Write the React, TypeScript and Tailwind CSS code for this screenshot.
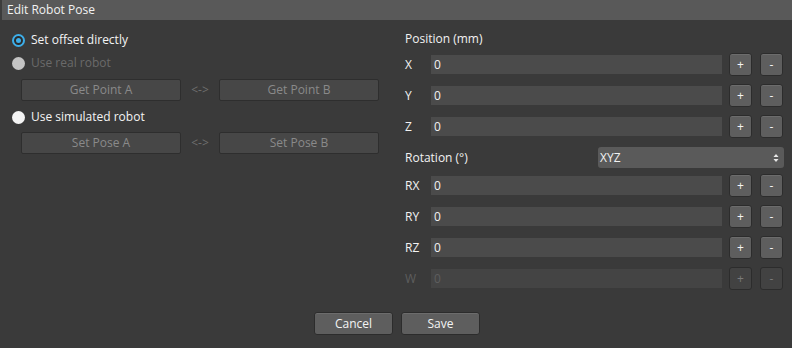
import React from "react";

const font = { fontFamily: '"Open Sans", "Noto Sans", sans-serif' };

function Radio({ state }: { state: "on" | "off" | "disabled" }) {
  if (state === "on")
    return (
      <span className="w-[13px] h-[13px] rounded-full border-2 border-[#3daee9] bg-[#2b2b2b] flex items-center justify-center">
        <span className="w-[5px] h-[5px] rounded-full bg-[#3daee9]" />
      </span>
    );
  if (state === "off") return <span className="w-[13px] h-[13px] rounded-full bg-[#f4f4f4]" />;
  return <span className="w-[13px] h-[13px] rounded-full bg-[#c4c4c4]" />;
}

function DisBtn({ label }: { label: string }) {
  return (
    <div className="w-[160px] h-[22px] rounded-[2px] border border-[#2e2e2e] bg-[#474747] text-[#8a8a8a] text-[12px] flex items-center justify-center">
      {label}
    </div>
  );
}

function SmallBtn({ label, disabled }: { label: string; disabled?: boolean }) {
  return (
    <div
      className={
        disabled
          ? "w-[23px] h-[23px] rounded-[3px] border border-[#2c2c2c] bg-[#424242] text-[#7a7a7a] text-[12px] flex items-center justify-center"
          : "w-[23px] h-[23px] rounded-[3px] border border-[#2c2c2c] bg-[#5e5e5e] text-[#f4f4f4] text-[12px] flex items-center justify-center shadow-[inset_0_1px_0_#6c6c6c]"
      }
    >
      {label}
    </div>
  );
}

function Row({ label, disabled }: { label: string; disabled?: boolean }) {
  return (
    <div className="flex items-center h-[23px]">
      <div className={"w-[26px] text-[12px] " + (disabled ? "text-[#5e5e5e]" : "text-[#f2f2f2]")}>{label}</div>
      <div
        className={
          "w-[291px] h-[19px] flex items-center pl-[3px] text-[12px] " +
          (disabled ? "bg-[#444444] text-[#5e5e5e]" : "bg-[#4b4b4b] text-[#f2f2f2]")
        }
      >
        0
      </div>
      <div className="ml-[7px]">
        <SmallBtn label="+" disabled={disabled} />
      </div>
      <div className="ml-[8px]">
        <SmallBtn label="-" disabled={disabled} />
      </div>
    </div>
  );
}

export default function App() {
  return (
    <div className="w-[792px] h-[348px] bg-[#3a3a3a] flex flex-col overflow-hidden" style={font}>
      <div className="h-[20px] bg-[#595959] text-[#f2f2f2] text-[12px] pl-[5px] flex items-center border-l-2 border-[#3c3c3c]">Edit Robot Pose</div>
      <div className="flex flex-1">
        <div className="w-[392px] pl-[12px] pt-[10px] flex flex-col">
          <div className="h-[20px] flex items-center gap-[6px] text-[12px] text-[#f4f4f4]">
            <Radio state="on" />
            <span>Set offset directly</span>
          </div>
          <div className="h-[20px] mt-[3px] flex items-center gap-[6px] text-[12px] text-[#6a6a6a]">
            <Radio state="disabled" />
            <span>Use real robot</span>
          </div>
          <div className="flex items-center mt-[6px] pl-[9px]">
            <DisBtn label="Get Point A" />
            <div className="w-[38px] text-center text-[12px] text-[#6e6e6e]">&lt;-&gt;</div>
            <DisBtn label="Get Point B" />
          </div>
          <div className="h-[20px] mt-[6px] flex items-center gap-[6px] text-[12px] text-[#f4f4f4]">
            <Radio state="off" />
            <span>Use simulated robot</span>
          </div>
          <div className="flex items-center mt-[5px] pl-[9px]">
            <DisBtn label="Set Pose A" />
            <div className="w-[38px] text-center text-[12px] text-[#6e6e6e]">&lt;-&gt;</div>
            <DisBtn label="Set Pose B" />
          </div>
        </div>
        <div className="flex flex-col pl-[13px] pt-[9px]">
          <div className="h-[20px] flex items-center text-[12px] text-[#f2f2f2]">Position (mm)</div>
          <div className="flex flex-col gap-[8px] mt-[4px]">
            <Row label="X" />
            <Row label="Y" />
            <Row label="Z" />
          </div>
          <div className="flex items-center h-[21px] mt-[9px]">
            <div className="w-[193px] text-[12px] text-[#f2f2f2]">Rotation (°)</div>
            <div className="w-[186px] h-[21px] rounded-[3px] bg-[#5a5a5a] text-[#f2f2f2] text-[12px] flex items-center pl-[2px] pr-[5px] justify-between">
              <span>XYZ</span>
              <svg width="6" height="10" viewBox="0 0 6 10">
                <path d="M3 1 L5.5 4 L0.5 4 Z" fill="#e8e8e8" />
                <path d="M3 9 L5.5 6 L0.5 6 Z" fill="#e8e8e8" />
              </svg>
            </div>
          </div>
          <div className="flex flex-col gap-[8px] mt-[6px]">
            <Row label="RX" />
            <Row label="RY" />
            <Row label="RZ" />
            <Row label="W" disabled />
          </div>
        </div>
      </div>
      <div className="flex justify-center gap-[8px] pb-[13px] pl-[2px]">
        <div className="w-[79px] h-[23px] rounded-[3px] border border-[#2c2c2c] bg-[#5e5e5e] text-[#f4f4f4] text-[12px] flex items-center justify-center shadow-[inset_0_1px_0_#6c6c6c]">Cancel</div>
        <div className="w-[79px] h-[23px] rounded-[3px] border border-[#2c2c2c] bg-[#5e5e5e] text-[#f4f4f4] text-[12px] flex items-center justify-center shadow-[inset_0_1px_0_#6c6c6c]">Save</div>
      </div>
    </div>
  );
}
